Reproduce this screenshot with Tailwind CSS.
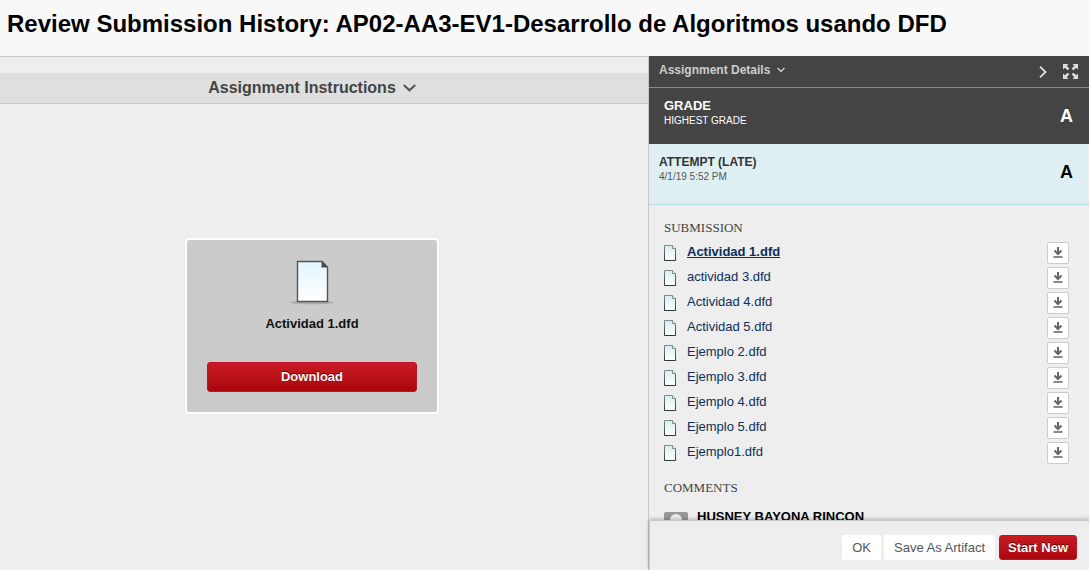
<!DOCTYPE html>
<html lang="en">
<head>
<meta charset="utf-8">
<meta name="viewport" content="width=device-width, initial-scale=1">
<title>Review Submission History</title>
<script src="https://cdn.jsdelivr.net/npm/@tailwindcss/browser@4"></script>
</head>
<body class="flex h-screen flex-col overflow-hidden bg-[#eeeeee] font-['Liberation_Sans',Arial,sans-serif] text-[13px] text-black">
<svg class="absolute size-0" aria-hidden="true">
  <defs>
    <linearGradient id="page" x1="0" y1="0" x2="0" y2="1"><stop offset="0" stop-color="#d8eeee"/><stop offset="1" stop-color="#ffffff"/></linearGradient>
    <linearGradient id="sheet" x1="0" y1="0" x2="0" y2="1"><stop offset="0" stop-color="#e3f4fd"/><stop offset="1" stop-color="#ffffff"/></linearGradient>
    <linearGradient id="edge" x1="0" y1="0" x2="0" y2="1"><stop offset="0" stop-color="#7b8a8c"/><stop offset="1" stop-color="#2c3a3c"/></linearGradient>
  </defs>
  <symbol id="file" viewBox="0 0 13 16">
    <path d="M0 15.500H13" stroke="#cfcfcf"/>
    <path d="M0.500 0.500H8.500L11.500 3.500V15.500H0.500Z" fill="url(#page)" stroke="url(#edge)"/>
    <path d="M8.500 0.500V3.500H11.500" fill="#ffffff" stroke="#7b8a8c"/>
  </symbol>
  <symbol id="down" viewBox="0 0 10 12">
    <path d="M5 0V7" stroke="#666666" stroke-width="2"/>
    <path d="M1.500 3.500L5 7L8.500 3.500" fill="none" stroke="#666666" stroke-width="2"/>
    <path d="M0.500 10H9.500" stroke="#888888" stroke-width="2"/>
  </symbol>
</svg>

<header class="h-14 shrink-0 bg-[#f8f8f8] px-[7px] pt-2">
  <h1 class="text-2xl leading-8 font-bold">Review Submission History: AP02-AA3-EV1-Desarrollo de Algoritmos usando DFD</h1>
</header>

<div class="flex min-h-0 flex-1">
  <main class="flex min-w-0 flex-1 flex-col border-t border-[#c8c8c8] pt-4">
    <h2 class="h-[31px] shrink-0 border-b border-[#c8c8c8] bg-[#dfdfdf] pr-6 text-center text-base leading-[29px] font-bold text-[#444444]">
      <button type="button" class="inline-flex items-center gap-[7px]">Assignment Instructions
        <svg class="h-2 w-[13px]" viewBox="0 0 13 8" fill="none" stroke="#555555" stroke-width="2"><path d="M0.700 1L6.500 6.300L12.300 1"/></svg>
      </button>
    </h2>
    <div class="flex flex-1 items-center justify-center pr-6 pb-[22px]">
      <section class="flex h-44 w-[254px] flex-col items-center rounded border-2 border-white bg-[#cbcbcb] px-5 pt-5">
        <svg class="h-[46px] w-11" viewBox="0 0 44 46" aria-hidden="true">
          <ellipse cx="22" cy="42.500" rx="22" ry="1.800" fill="#aaaaaa"/>
          <path d="M7.500 1.500H32L37.500 7V41.500H7.500Z" fill="url(#sheet)" stroke="#505557" stroke-width="1.400"/>
          <path d="M31.500 1L38 7.500H31.500Z" fill="#4a4a4a"/>
        </svg>
        <p class="mt-2 leading-5 font-bold text-[#111111]">Actividad 1.dfd</p>
        <button type="button" class="mt-7 h-[30px] w-full rounded-[3px] border border-[#c0122c] bg-linear-to-b from-[#c81b22] to-[#aa060c] font-bold text-[#f5f5f5] text-shadow-[0_-1px_0_#550000]">Download</button>
      </section>
    </div>
  </main>

  <aside class="flex w-[441px] shrink-0 flex-col border-l border-[#c8c8c8]">
    <div class="flex h-8 shrink-0 items-center border-b border-[#888888] bg-[#444444] pr-[11px] pl-[10px]">
      <button type="button" class="flex items-center gap-[7px] pb-1 text-xs font-bold text-[#cccccc]">Assignment Details
        <svg class="h-[6px] w-2" viewBox="0 0 8 6" fill="none" stroke="#cccccc" stroke-width="1.500"><path d="M0.500 1L4 4.500L7.500 1"/></svg>
      </button>
      <button type="button" class="ml-auto" aria-label="Collapse panel">
        <svg class="h-3 w-2" viewBox="0 0 8 12" fill="none" stroke="#dddddd" stroke-width="1.800"><path d="M1 0.700L6.500 6L1 11.300"/></svg>
      </button>
      <button type="button" class="ml-4" aria-label="Full screen">
        <svg class="h-[15px] w-[15px]" viewBox="0 0 15 15" fill="#dddddd"><path d="M0 0H5.500L3.800 1.700L6.300 4.800L4.800 6.300L1.700 3.800L0 5.500ZM15 0V5.500L13.300 3.800L10.200 6.300L8.700 4.800L11.200 1.700L9.500 0ZM0 15V9.500L1.700 11.200L4.800 8.700L6.300 10.200L3.800 13.300L5.500 15ZM15 15H9.500L11.200 13.300L8.700 10.200L10.200 8.700L13.300 11.200L15 9.500Z"/></svg>
      </button>
    </div>
    <section class="flex h-14 shrink-0 items-center justify-between bg-[#444444] pr-4 pl-[15px] text-white">
      <div class="pb-[6px]">
        <h3 class="text-[13px] leading-4 font-bold">GRADE</h3>
        <p class="text-[10px] leading-[14px]">HIGHEST GRADE</p>
      </div>
      <strong class="text-lg leading-5">A</strong>
    </section>
    <section class="flex h-[61px] shrink-0 justify-between border-b border-[#b5dce6] bg-[#dff0f5] pt-[10px] pr-4 pl-[10px]">
      <div>
        <h3 class="text-xs leading-4 font-bold text-[#333333]">ATTEMPT (LATE)</h3>
        <p class="text-[10px] leading-[14px] text-[#555555]">4/1/19 5:52 PM</p>
      </div>
      <strong class="pt-2 text-lg leading-5">A</strong>
    </section>

    <div class="min-h-0 flex-1 overflow-hidden pt-4 pr-5 pl-[15px]">
      <h3 class="font-['Liberation_Serif',serif] text-[13px] leading-[14px] text-[#444444]">SUBMISSION</h3>
      <ul class="mt-[5px] text-[#0a2f5c]">
        <li class="flex h-[25px] items-center"><svg class="mr-[10px] h-4 w-[13px]"><use href="#file"/></svg><a href="#" class="pb-px font-bold underline">Actividad 1.dfd</a><button type="button" aria-label="Download Actividad 1.dfd" class="ml-auto mt-px flex size-[22px] items-center justify-center rounded-xs border border-[#cccccc] bg-white"><svg class="h-3 w-[10px]"><use href="#down"/></svg></button></li>
        <li class="flex h-[25px] items-center"><svg class="mr-[10px] h-4 w-[13px]"><use href="#file"/></svg><a href="#" class="pb-px">actividad 3.dfd</a><button type="button" aria-label="Download actividad 3.dfd" class="ml-auto mt-px flex size-[22px] items-center justify-center rounded-xs border border-[#cccccc] bg-white"><svg class="h-3 w-[10px]"><use href="#down"/></svg></button></li>
        <li class="flex h-[25px] items-center"><svg class="mr-[10px] h-4 w-[13px]"><use href="#file"/></svg><a href="#" class="pb-px">Actividad 4.dfd</a><button type="button" aria-label="Download Actividad 4.dfd" class="ml-auto mt-px flex size-[22px] items-center justify-center rounded-xs border border-[#cccccc] bg-white"><svg class="h-3 w-[10px]"><use href="#down"/></svg></button></li>
        <li class="flex h-[25px] items-center"><svg class="mr-[10px] h-4 w-[13px]"><use href="#file"/></svg><a href="#" class="pb-px">Actividad 5.dfd</a><button type="button" aria-label="Download Actividad 5.dfd" class="ml-auto mt-px flex size-[22px] items-center justify-center rounded-xs border border-[#cccccc] bg-white"><svg class="h-3 w-[10px]"><use href="#down"/></svg></button></li>
        <li class="flex h-[25px] items-center"><svg class="mr-[10px] h-4 w-[13px]"><use href="#file"/></svg><a href="#" class="pb-px">Ejemplo 2.dfd</a><button type="button" aria-label="Download Ejemplo 2.dfd" class="ml-auto mt-px flex size-[22px] items-center justify-center rounded-xs border border-[#cccccc] bg-white"><svg class="h-3 w-[10px]"><use href="#down"/></svg></button></li>
        <li class="flex h-[25px] items-center"><svg class="mr-[10px] h-4 w-[13px]"><use href="#file"/></svg><a href="#" class="pb-px">Ejemplo 3.dfd</a><button type="button" aria-label="Download Ejemplo 3.dfd" class="ml-auto mt-px flex size-[22px] items-center justify-center rounded-xs border border-[#cccccc] bg-white"><svg class="h-3 w-[10px]"><use href="#down"/></svg></button></li>
        <li class="flex h-[25px] items-center"><svg class="mr-[10px] h-4 w-[13px]"><use href="#file"/></svg><a href="#" class="pb-px">Ejemplo 4.dfd</a><button type="button" aria-label="Download Ejemplo 4.dfd" class="ml-auto mt-px flex size-[22px] items-center justify-center rounded-xs border border-[#cccccc] bg-white"><svg class="h-3 w-[10px]"><use href="#down"/></svg></button></li>
        <li class="flex h-[25px] items-center"><svg class="mr-[10px] h-4 w-[13px]"><use href="#file"/></svg><a href="#" class="pb-px">Ejemplo 5.dfd</a><button type="button" aria-label="Download Ejemplo 5.dfd" class="ml-auto mt-px flex size-[22px] items-center justify-center rounded-xs border border-[#cccccc] bg-white"><svg class="h-3 w-[10px]"><use href="#down"/></svg></button></li>
        <li class="flex h-[25px] items-center"><svg class="mr-[10px] h-4 w-[13px]"><use href="#file"/></svg><a href="#" class="pb-px">Ejemplo1.dfd</a><button type="button" aria-label="Download Ejemplo1.dfd" class="ml-auto mt-px flex size-[22px] items-center justify-center rounded-xs border border-[#cccccc] bg-white"><svg class="h-3 w-[10px]"><use href="#down"/></svg></button></li>
      </ul>
      <h3 class="mt-4 font-['Liberation_Serif',serif] text-[13px] leading-[14px] text-[#444444]">COMMENTS</h3>
      <div class="mt-[14px] flex items-start gap-[9px]">
        <svg class="mt-[3px] size-6 rounded-xs" viewBox="0 0 24 24" aria-hidden="true"><path d="M0 0H24V24H0Z" fill="#999999"/><circle cx="12" cy="8" r="6" fill="#eeeeee"/><path d="M2 24C2 12 22 12 22 24Z" fill="#eeeeee"/></svg>
        <strong class="text-[13px] leading-4">HUSNEY BAYONA RINCON</strong>
      </div>
    </div>

    <footer class="z-10 flex h-[50px] shrink-0 items-center justify-end border-t border-l border-[#c8c8c8] bg-[#eeeeee] pt-1 pr-3 shadow-[0_-1px_4px_rgba(0,0,0,0.25)]">
      <button type="button" class="h-[25px] rounded-xs bg-white px-[10px] text-[#555555]">OK</button>
      <button type="button" class="ml-[3px] h-[25px] rounded-xs bg-white px-[10px] text-[#555555]">Save As Artifact</button>
      <button type="button" class="ml-1 h-[25px] rounded-[3px] border border-[#c0122c] bg-linear-to-b from-[#c81b22] to-[#aa060c] px-2 font-bold text-[#f5f5f5] text-shadow-[0_-1px_0_#550000]">Start New</button>
    </footer>
  </aside>
</div>
</body>
</html>
